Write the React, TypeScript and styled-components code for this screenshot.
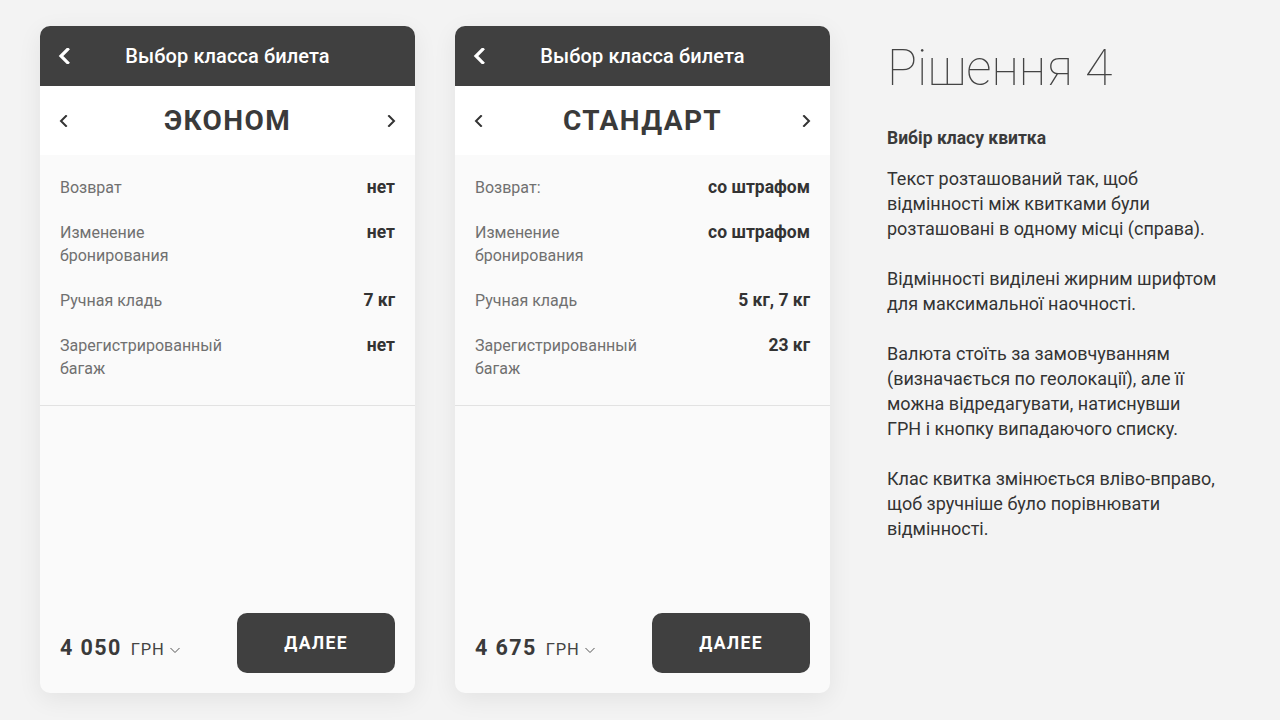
import styled, { createGlobalStyle } from "styled-components";

const GlobalStyle = createGlobalStyle`
  html, body {
    margin: 0;
    padding: 0;
    background: #f3f3f3;
    font-family: Roboto, "Noto Sans", "Liberation Sans", sans-serif;
    color: #333;
  }
`;

type Row = { label: string[]; value: string };
type Ticket = { name: string; price: string; rows: Row[] };

const tickets: Ticket[] = [
  {
    name: "ЭКОНОМ",
    price: "4 050",
    rows: [
      { label: ["Возврат"], value: "нет" },
      { label: ["Изменение", "бронирования"], value: "нет" },
      { label: ["Ручная кладь"], value: "7 кг" },
      { label: ["Зарегистрированный", "багаж"], value: "нет" },
    ],
  },
  {
    name: "СТАНДАРТ",
    price: "4 675",
    rows: [
      { label: ["Возврат:"], value: "со штрафом" },
      { label: ["Изменение", "бронирования"], value: "со штрафом" },
      { label: ["Ручная кладь"], value: "5 кг, 7 кг" },
      { label: ["Зарегистрированный", "багаж"], value: "23 кг" },
    ],
  },
];

const Chevron = ({ dir, size = 12, stroke = "#333", width = 2 }: { dir: "left" | "right" | "down"; size?: number; stroke?: string; width?: number }) => {
  const d =
    dir === "left" ? "M8 1 L3 6 L8 11" : dir === "right" ? "M4 1 L9 6 L4 11" : "M1 4 L6 9 L11 4";
  return (
    <svg width={size} height={size} viewBox="0 0 12 12" fill="none">
      <path d={d} stroke={stroke} strokeWidth={width} strokeLinecap="square" />
    </svg>
  );
};

export default function App() {
  return (
    <>
      <GlobalStyle />
      <Page>
        {tickets.map((t) => (
          <Card key={t.name}>
            <Header>
              <BackBtn>
                <Chevron dir="left" size={16} stroke="#fff" width={2.4} />
              </BackBtn>
              <HeaderTitle>Выбор класса билета</HeaderTitle>
            </Header>
            <ClassBar>
              <Chevron dir="left" />
              <ClassName>{t.name}</ClassName>
              <Chevron dir="right" />
            </ClassBar>
            <Details>
              {t.rows.map((r) => (
                <DetailRow key={r.label.join(" ")}>
                  <Label>
                    {r.label.map((l) => (
                      <div key={l}>{l}</div>
                    ))}
                  </Label>
                  <Value>{r.value}</Value>
                </DetailRow>
              ))}
            </Details>
            <Footer>
              <Price>
                <Amount>{t.price}</Amount>
                <Currency>ГРН</Currency>
                <Chevron dir="down" size={10} stroke="#555" width={1.2} />
              </Price>
              <NextButton>ДАЛЕЕ</NextButton>
            </Footer>
          </Card>
        ))}
        <Notes>
          <NotesTitle>Рішення 4</NotesTitle>
          <Subtitle>Вибір класу квитка</Subtitle>
          <Para>
            Текст розташований так, щоб
            <br />
            відмінності між квитками були
            <br />
            розташовані в одному місці (справа).
          </Para>
          <Para>
            Відмінності виділені жирним шрифтом
            <br />
            для максимальної наочності.
          </Para>
          <Para>
            Валюта стоїть за замовчуванням
            <br />
            (визначається по геолокації), але її
            <br />
            можна відредагувати, натиснувши
            <br />
            ГРН і кнопку випадаючого списку.
          </Para>
          <Para>
            Клас квитка змінюється вліво-вправо,
            <br />
            щоб зручніше було порівнювати
            <br />
            відмінності.
          </Para>
        </Notes>
      </Page>
    </>
  );
}

const Page = styled.div`
  display: flex;
  align-items: flex-start;
  gap: 40px;
  padding: 26px 40px;
  height: 720px;
  box-sizing: border-box;
  overflow: hidden;
`;

const Card = styled.div`
  width: 375px;
  height: 667px;
  flex-shrink: 0;
  border-radius: 10px;
  overflow: hidden;
  background: #fafafa;
  display: flex;
  flex-direction: column;
  box-shadow: 0 6px 24px rgba(0, 0, 0, 0.07);
`;

const Header = styled.div`
  position: relative;
  height: 60px;
  background: #404040;
  display: flex;
  align-items: center;
  justify-content: center;
`;

const BackBtn = styled.div`
  position: absolute;
  left: 17px;
  top: 22px;
  display: flex;
`;

const HeaderTitle = styled.div`
  color: #fff;
  font-size: 20px;
  font-weight: 500;
  letter-spacing: 0.1px;
`;

const ClassBar = styled.div`
  height: 69px;
  background: #fff;
  display: flex;
  align-items: center;
  justify-content: space-between;
  padding: 0 18px;
`;

const ClassName = styled.div`
  font-size: 28px;
  font-weight: 700;
  letter-spacing: 1.4px;
  color: #3a3a3a;
`;

const Details = styled.div`
  padding: 21px 20px 25px;
  display: flex;
  flex-direction: column;
  gap: 22px;
  border-bottom: 1px solid #e2e2e2;
`;

const DetailRow = styled.div`
  display: flex;
  justify-content: space-between;
  align-items: flex-start;
`;

const Label = styled.div`
  font-size: 16px;
  line-height: 23px;
  color: #707070;
`;

const Value = styled.div`
  font-size: 17.5px;
  line-height: 23px;
  font-weight: 700;
  color: #333;
`;

const Footer = styled.div`
  margin-top: auto;
  padding: 0 20px 20px;
  display: flex;
  align-items: center;
  justify-content: space-between;
`;

const Price = styled.div`
  display: flex;
  align-items: baseline;
  gap: 5px;
  padding-top: 8px;
  svg {
    align-self: center;
    margin-top: 6px;
  }
`;

const Amount = styled.span`
  font-size: 21.5px;
  font-weight: 700;
  letter-spacing: 1.4px;
  color: #3a3a3a;
  margin-right: 4px;
`;

const Currency = styled.span`
  font-size: 16.5px;
  letter-spacing: 0.9px;
  color: #444;
`;

const NextButton = styled.button`
  width: 158px;
  height: 60px;
  border: none;
  border-radius: 10px;
  background: #404040;
  color: #fff;
  font-family: Roboto, "Liberation Sans", sans-serif;
  font-size: 17.5px;
  font-weight: 700;
  letter-spacing: 1.3px;
`;

const Notes = styled.div`
  padding-left: 17px;
  padding-top: 14px;
  width: 380px;
`;

const NotesTitle = styled.div`
  font-size: 50px;
  font-weight: 100;
  color: #444;
  line-height: 56px;
  margin-bottom: 30px;
`;

const Subtitle = styled.div`
  font-size: 17.5px;
  font-weight: 700;
  color: #3a3a3a;
  line-height: 24px;
  margin-bottom: 16px;
`;

const Para = styled.p`
  margin: 0 0 25px;
  font-size: 18px;
  line-height: 25px;
  color: #333;
`;
